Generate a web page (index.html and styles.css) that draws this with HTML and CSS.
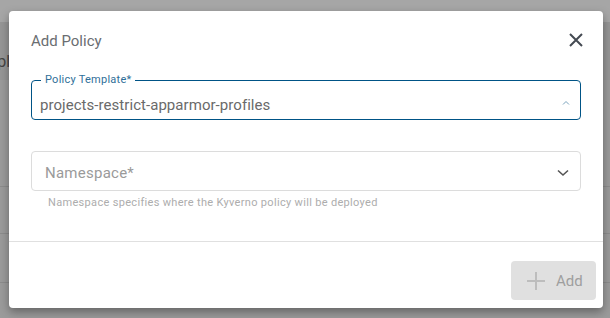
FILE: index.html
```html
<!DOCTYPE html>
<html lang="en">
<head>
    <meta charset="UTF-8">
    <meta name="viewport" content="width=device-width, initial-scale=1.0">
    <title>Add Policy</title>
    <link rel="stylesheet" href="styles.css">
</head>
<body>

    <div class="page">
        <div class="page-top"></div>
        <div class="page-toolbar"><span class="page-title">Templ</span></div>
        <div class="page-rows">
            <div class="page-row"></div>
            <div class="page-row"></div>
            <div class="page-row"></div>
        </div>
    </div>

    <div class="dialog">
        <header class="dialog-header">
            <h2>Add Policy</h2>
            <button class="close-btn" aria-label="Close">
                <svg width="14" height="14" viewBox="0 0 14 14">
                    <path d="M1 1 L13 13 M13 1 L1 13" stroke="#444a52" stroke-width="2" fill="none"/>
                </svg>
            </button>
        </header>

        <section class="dialog-body">
            <div class="field field-active">
                <span class="field-label">Policy Template*</span>
                <span class="field-value">projects-restrict-apparmor-profiles</span>
                <svg class="caret-up" width="8" height="6" viewBox="0 0 8 6">
                    <path d="M1 4.5 L4 1.5 L7 4.5" stroke="#7aa3bd" stroke-width="1" fill="none"/>
                </svg>
            </div>

            <div class="field-group">
                <div class="field">
                    <span class="field-placeholder">Namespace*</span>
                    <svg class="chevron" width="12" height="8" viewBox="0 0 12 8">
                        <path d="M1 1.5 L6 6 L11 1.5" stroke="#555" stroke-width="1.6" fill="none"/>
                    </svg>
                </div>
                <p class="field-help">Namespace specifies where the Kyverno policy will be deployed</p>
            </div>
        </section>

        <footer class="dialog-footer">
            <button class="add-btn" disabled>
                <svg width="20" height="20" viewBox="0 0 20 20">
                    <path d="M10 1 V19 M1 10 H19" stroke="#bdbdbd" stroke-width="2" fill="none"/>
                </svg>
                Add
            </button>
        </footer>
    </div>

</body>
</html>
```

FILE: styles.css
```css
/* General Styles */
body {
    font-family: Roboto, "Liberation Sans", Arial, sans-serif;
    background: #9b9b9b;
    margin: 0;
    padding: 0;
    height: 318px;
    overflow: hidden;
}

/* Background page (under overlay) */
.page-top {
    height: 22px;
    background: #a6a6a6;
}

.page-toolbar {
    height: 58px;
    background: #969696;
    display: flex;
    align-items: center;
    padding-top: 0;
}

.page-title {
    margin-left: -34px;
    margin-top: 20px;
    font-size: 16px;
    color: #454545;
}

.page-rows {
    padding-top: 106px;
}

.page-row {
    height: 46px;
    border-top: 1px solid #8c8c8c;
}

.page-row:nth-child(2) {
    height: 48px;
}

/* Dialog */
.dialog {
    position: absolute;
    top: 11px;
    left: 9px;
    width: 594px;
    height: 297px;
    background: white;
    border-radius: 4px;
    box-shadow: 0px 4px 10px rgba(0, 0, 0, 0.35);
    display: flex;
    flex-direction: column;
}

.dialog-header {
    display: flex;
    align-items: center;
    justify-content: space-between;
    height: 60px;
    padding: 0 20px 0 22px;
}

.dialog-header h2 {
    margin: 0;
    font-size: 15px;
    font-weight: normal;
    color: #6a6d71;
}

.close-btn {
    background: none;
    border: none;
    padding: 0;
    width: 14px;
    height: 14px;
    margin-top: -2px;
    cursor: pointer;
}

.dialog-body {
    padding: 9px 22px 0 22px;
    flex: 1;
    border-bottom: 1px solid #e0e0e0;
}

/* Fields */
.field {
    position: relative;
    height: 38px;
    border: 1px solid #dcdcdc;
    border-radius: 4px;
    display: flex;
    align-items: center;
    padding: 0 13px;
}

.field-active {
    border-color: #005486;
    padding-left: 8px;
}

.field-label {
    position: absolute;
    top: -8px;
    left: 9px;
    padding: 0 4px;
    background: white;
    font-size: 11px;
    color: #2f6f99;
    letter-spacing: 0.25px;
}

.field-value {
    flex: 1;
    font-size: 15px;
    color: #6a6a6a;
    margin-top: 10px;
    letter-spacing: 0.05px;
}

.caret-up {
    margin-top: 6px;
    margin-right: -3px;
}

.field-group {
    margin-top: 31px;
}

.field-placeholder {
    flex: 1;
    font-size: 15px;
    color: #9a9a9a;
    letter-spacing: 0.25px;
    margin-top: 3px;
}

.chevron {
    margin-right: -2px;
    margin-top: 4px;
}

.field-help {
    margin: 5px 0 0 17px;
    font-size: 11px;
    color: #adadad;
    letter-spacing: 0.32px;
}

/* Footer */
.dialog-footer {
    display: flex;
    justify-content: flex-end;
    padding: 19px 7px 8px 0;
}

.add-btn {
    display: flex;
    align-items: center;
    gap: 10px;
    width: 85px;
    height: 39px;
    padding: 0 0 0 15px;
    background: #e0e0e0;
    border: none;
    border-radius: 4px;
    font-family: inherit;
    font-size: 15px;
    color: #9e9e9e;
}
```
